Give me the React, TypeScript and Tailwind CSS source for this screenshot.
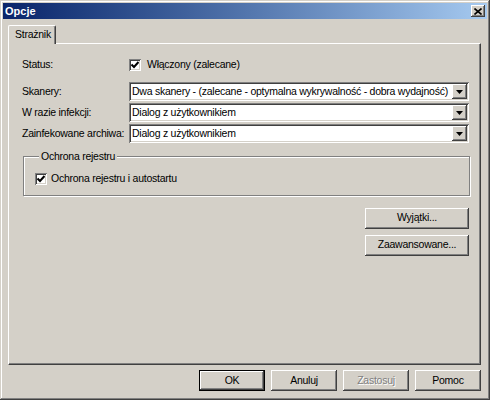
import React from "react";

const raised =
  "bg-[#d4d0c8] shadow-[inset_-1px_-1px_#404040,inset_1px_1px_#ffffff,inset_-2px_-2px_#808080,inset_2px_2px_#d4d0c8]";
const sunken =
  "shadow-[inset_1px_1px_#808080,inset_-1px_-1px_#ffffff,inset_2px_2px_#404040,inset_-2px_-2px_#d4d0c8]";

const font = { fontFamily: '"Liberation Sans", Arial, sans-serif' };

const Check = () => (
  <div className={`w-[12px] h-[12px] shrink-0 bg-white p-[2px] flex items-center justify-center ${sunken}`}>
    <svg width="8" height="8" viewBox="0 0 8 8">
      <path d="M0.5 3.5 L3 6 L7.5 1" stroke="#000" strokeWidth="2" fill="none" />
    </svg>
  </div>
);

const Combo = ({ value }: { value: string }) => (
  <div className={`h-[19px] w-[340px] bg-white p-[2px] flex ${sunken}`}>
    <div className="flex-1 px-[1px] leading-[15px] text-black whitespace-nowrap overflow-hidden">{value}</div>
    <div className={`w-[15px] h-[15px] flex items-center justify-center ${raised}`}>
      <svg width="7" height="4" viewBox="0 0 7 4">
        <polygon points="0,0 7,0 3.5,4" fill="#000" />
      </svg>
    </div>
  </div>
);

const Button = ({
  label,
  width,
  isDefault,
  disabled,
}: {
  label: string;
  width: string;
  isDefault?: boolean;
  disabled?: boolean;
}) => (
  <div className={`${width} h-[21px] ${isDefault ? "border border-black" : ""}`}>
    <div
      className={`w-full h-full flex items-center justify-center ${raised} ${
        disabled ? "text-[#808080] [text-shadow:1px_1px_#ffffff]" : "text-black"
      }`}
    >
      {label}
    </div>
  </div>
);

export default function App() {
  return (
    <div
      className="w-[490px] h-[400px] bg-[#d4d0c8] flex flex-col text-[10.5px] tracking-[-0.25px] shadow-[inset_-1px_-1px_#404040,inset_1px_1px_#d4d0c8,inset_-2px_-2px_#808080,inset_2px_2px_#ffffff]"
      style={font}
    >
      {/* title bar */}
      <div className="mx-[3px] mt-[3px] h-[16px] bg-linear-to-r from-[#0a246a] to-[#a6caf0] flex items-center pl-[2px] pr-[2px]">
        <span className="text-white font-bold text-[11px] tracking-normal leading-none">Opcje</span>
        <div className={`ml-auto w-[14px] h-[12px] flex items-center justify-center ${raised}`}>
          <svg width="8" height="7" viewBox="0 0 8 7">
            <path d="M0.5 0.5 L7.5 6.5 M7.5 0.5 L0.5 6.5" stroke="#000" strokeWidth="1.6" />
          </svg>
        </div>
      </div>

      <div className="pl-[8px] pr-[9px] pt-[6px] flex flex-col">
        {/* tab strip */}
        <div className="flex">
          <div className="relative z-10 -mb-px h-[19px] w-[48px] bg-[#d4d0c8] border-t border-l border-white border-r border-r-[#404040] rounded-tl-[2px] rounded-tr-[2px] shadow-[inset_-1px_0_#808080] flex items-center pl-[6px] text-black">
            Strażnik
          </div>
        </div>

        {/* tab panel */}
        <div className="h-[322px] border border-t-white border-l-white border-r-[#404040] border-b-[#404040] shadow-[inset_-1px_-1px_#808080] pl-[13px] pr-[11px] pt-[14px] flex flex-col text-black">
          <div className="flex items-center h-[13px]">
            <div className="w-[107px] whitespace-nowrap">Status:</div>
            <Check />
            <div className="ml-[6px]">Włączony (zalecane)</div>
          </div>

          <div className="mt-[11px] flex flex-col gap-[2px]">
            <div className="flex items-center">
              <div className="w-[107px] whitespace-nowrap">Skanery:</div>
              <Combo value="Dwa skanery - (zalecane - optymalna wykrywalność - dobra wydajność)" />
            </div>
            <div className="flex items-center">
              <div className="w-[107px] whitespace-nowrap">W razie infekcji:</div>
              <Combo value="Dialog z użytkownikiem" />
            </div>
            <div className="flex items-center">
              <div className="w-[107px] whitespace-nowrap">Zainfekowane archiwa:</div>
              <Combo value="Dialog z użytkownikiem" />
            </div>
          </div>

          <fieldset className="mt-[7px] ml-px w-[447px] border border-[#808080] shadow-[inset_1px_1px_#ffffff,1px_1px_#ffffff] pl-[11px] pt-[8px] pb-[8px]">
            <legend className="ml-[4px] px-[2px] bg-[#d4d0c8] leading-[13px]">Ochrona rejestru</legend>
            <div className="flex items-center">
              <Check />
              <div className="ml-[4px]">Ochrona rejestru i autostartu</div>
            </div>
          </fieldset>

          <div className="mt-[12px] flex flex-col items-end gap-[6px]">
            <Button label="Wyjątki..." width="w-[104px]" />
            <Button label="Zaawansowane..." width="w-[104px]" />
          </div>
        </div>

        {/* bottom buttons */}
        <div className="mt-[5px] flex justify-end gap-[6px]">
          <Button label="OK" width="w-[66px]" isDefault />
          <Button label="Anuluj" width="w-[66px]" />
          <Button label="Zastosuj" width="w-[66px]" disabled />
          <Button label="Pomoc" width="w-[66px]" />
        </div>
      </div>
    </div>
  );
}
